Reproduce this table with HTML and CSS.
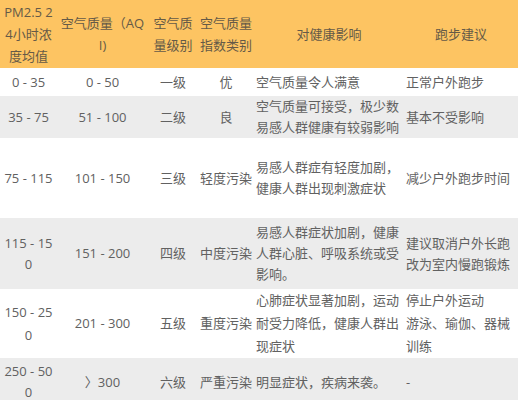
FILE: index.html
```html
<!DOCTYPE html>
<html lang="zh">
<head>
<meta charset="utf-8">
<title>空气质量与跑步建议</title>
<link rel="stylesheet" href="styles.css">
</head>
<body>
<table class="aqi">
  <colgroup>
    <col class="c1"><col class="c2"><col class="c3"><col class="c4"><col class="c5"><col class="c6">
  </colgroup>
  <thead>
    <tr class="head">
      <th>PM2.5 2<br>4小时浓<br>度均值</th>
      <th>空气质量（AQ<br>I)</th>
      <th>空气质<br>量级别</th>
      <th>空气质量<br>指数类别</th>
      <th>对健康影响</th>
      <th>跑步建议</th>
    </tr>
  </thead>
  <tbody>
    <tr class="r1">
      <td>0 - 35</td><td>0 - 50</td><td>一级</td><td>优</td>
      <td class="txt">空气质量令人满意</td><td class="txt">正常户外跑步</td>
    </tr>
    <tr class="r2 alt">
      <td>35 - 75</td><td>51 - 100</td><td>二级</td><td>良</td>
      <td class="txt">空气质量可接受，极少数易感人群健康有较弱影响</td><td class="txt">基本不受影响</td>
    </tr>
    <tr class="r3">
      <td>75 - 115</td><td>101 - 150</td><td>三级</td><td>轻度污染</td>
      <td class="txt">易感人群症有轻度加剧，健康人群出现刺激症状</td><td class="txt">减少户外跑步时间</td>
    </tr>
    <tr class="r4 alt">
      <td>115 - 15<br>0</td><td>151 - 200</td><td>四级</td><td>中度污染</td>
      <td class="txt">易感人群症状加剧，健康人群心脏、呼吸系统或受影响。</td><td class="txt">建议取消户外长跑改为室内慢跑锻炼</td>
    </tr>
    <tr class="r5">
      <td>150 - 25<br>0</td><td>201 - 300</td><td>五级</td><td>重度污染</td>
      <td class="txt">心肺症状显著加剧，运动耐受力降低，健康人群出现症状</td><td class="txt">停止户外运动<br>游泳、瑜伽、器械<br>训练</td>
    </tr>
    <tr class="r6 alt">
      <td>250 - 50<br>0</td><td>〉300</td><td>六级</td><td>严重污染</td>
      <td class="txt">明显症状，疾病来袭。</td><td class="txt">-</td>
    </tr>
  </tbody>
</table>
</body>
</html>
```
FILE: styles.css
```css
html, body {
  margin: 0;
  padding: 0;
  background: #ffffff;
}
body {
  font-family: "Open Sans", "Noto Sans CJK SC", sans-serif;
  font-size: 13px;
  color: #616161;
  overflow: hidden;
}
.aqi {
  width: 518px;
  border-collapse: collapse;
  table-layout: fixed;
}
.c1 { width: 57px; }
.c2 { width: 91px; }
.c3 { width: 50px; }
.c4 { width: 56px; }
.c5 { width: 150px; }
.c6 { width: 114px; }
.aqi th, .aqi td {
  padding: 0 2px;
  text-align: center;
  vertical-align: middle;
  line-height: 21px;
  font-weight: normal;
  word-break: break-all;
}
.head {
  background: #fdc462;
  height: 68px;
}
.head th {
  line-height: 22px;
  color: #655a47;
}
.aqi td.txt {
  text-align: left;
}
.alt { background: #ececec; }
.r1 { height: 28px; }
.r2 { height: 42px; }
.r3 { height: 80px; }
.r4 { height: 71px; }
.r5 { height: 69px; }
.r6 { height: 48px; }
.r5 td { line-height: 23px; }
```
